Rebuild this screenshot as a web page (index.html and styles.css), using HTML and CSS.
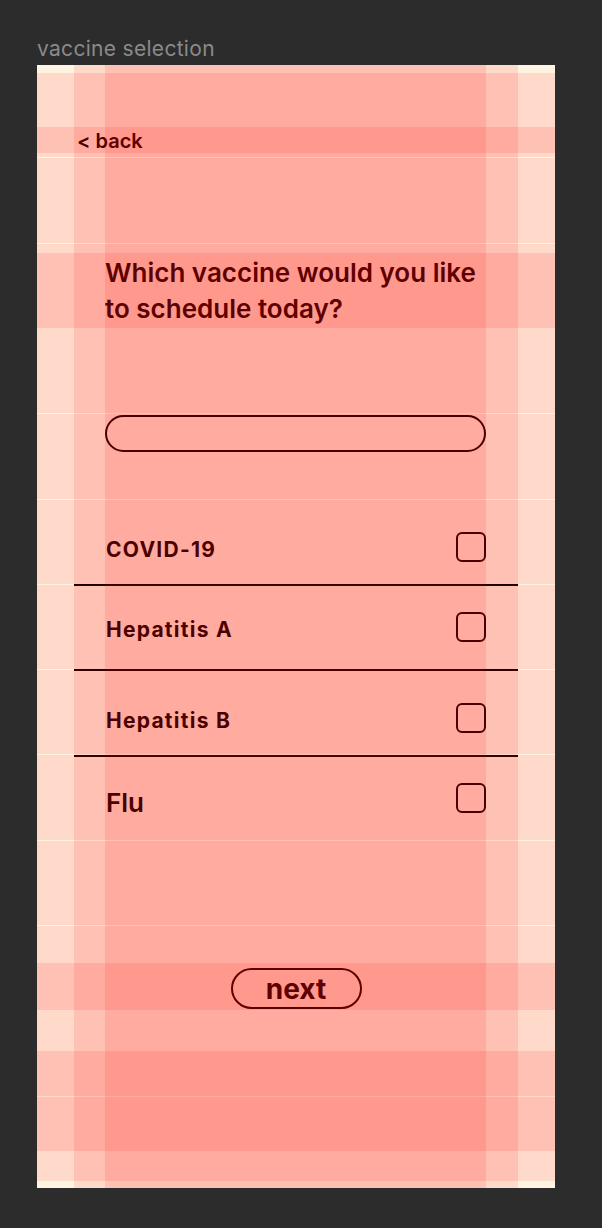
FILE: index.html
```html
<!DOCTYPE html>
<html lang="en">
<head>
<meta charset="utf-8">
<title>vaccine selection</title>
<link rel="stylesheet" href="styles.css">
</head>
<body>
<div class="canvas">
  <div class="frame-label">vaccine selection</div>
  <div class="frame">
    <main class="screen">
      <a class="back">&lt; back</a>
      <h1 class="question">Which vaccine would you like to schedule today?</h1>
      <div class="search"></div>
      <ul class="list">
        <li class="item item--low"><span class="label">COVID-19</span><span class="check"></span></li>
        <li class="item"><span class="label">Hepatitis A</span><span class="check"></span></li>
        <li class="item item--low"><span class="label">Hepatitis B</span><span class="check"></span></li>
        <li class="item item--last"><span class="label label--big">Flu</span><span class="check"></span></li>
      </ul>
      <div class="actions"><button class="next">next</button></div>
    </main>
    <div class="overlay rows">
      <div></div><div></div><div></div><div></div><div></div><div></div><div></div>
      <div></div><div></div><div></div><div></div><div></div><div></div>
    </div>
    <div class="overlay cols cols--outer"><div></div></div>
    <div class="overlay cols cols--inner"><div></div></div>
    <div class="overlay bands">
      <div class="band band--1"></div>
      <div class="band band--2"></div>
      <div class="band band--3"></div>
      <div class="band band--4"></div>
    </div>
  </div>
</div>
</body>
</html>
```

FILE: styles.css
```css
* { box-sizing: border-box; }

html, body {
  margin: 0;
  padding: 0;
  background: #2c2c2c;
}

.canvas {
  padding: 37px 0 0 37px;
  font-family: Inter, "Noto Sans", sans-serif;
}

.frame-label {
  height: 24px;
  line-height: 24px;
  font-size: 21px;
  letter-spacing: 0.3px;
  color: #8a8a8a;
  margin-bottom: 4px;
}

.frame {
  position: relative;
  width: 518px;
  height: 1123px;
  background: #fff4e2;
  overflow: hidden;
}

.screen {
  display: flex;
  flex-direction: column;
  color: #000;
}

.back {
  margin: 64px 0 0 40px;
  font-size: 20px;
  line-height: 25px;
  font-weight: 600;
  height: 25px;
}

.question {
  margin: 101px 0 0 68px;
  width: 381px;
  font-size: 26px;
  line-height: 36px;
  font-weight: 600;
}

.search {
  margin: 88px 0 0 68px;
  width: 381px;
  height: 37px;
  border: 2px solid #000;
  border-radius: 20px;
}

.list {
  list-style: none;
  margin: 48px 0 0 37px;
  padding: 0;
  width: 444px;
}

.item {
  height: 85.5px;
  display: flex;
  align-items: center;
  justify-content: space-between;
  padding: 0 32px 0 32px;
  border-bottom: 2px solid #000;
}

.item--low { padding-top: 11px; }

.item--last {
  border-bottom: none;
  height: 83.5px;
}

.label {
  margin-top: 4px;
  font-size: 21px;
  font-weight: 700;
  letter-spacing: 0.06em;
}

.label--big {
  margin-top: 9px;
  font-size: 26px;
  font-weight: 600;
  letter-spacing: 0;
}

.check {
  width: 30px;
  height: 30px;
  border: 2px solid #000;
  border-radius: 6px;
}

.actions {
  display: flex;
  justify-content: center;
  margin-top: 128px;
}

.next {
  width: 131px;
  height: 41px;
  border: 2px solid #000;
  border-radius: 21px;
  background: transparent;
  font-family: Inter, "Noto Sans", sans-serif;
  font-size: 28px;
  font-weight: 700;
  color: #000;
  display: flex;
  align-items: center;
  justify-content: center;
  padding: 0;
}

/* Layout grid overlays */
.overlay {
  position: absolute;
  inset: 0;
  pointer-events: none;
}

.rows {
  display: grid;
  grid-template-rows: repeat(13, 1fr);
  row-gap: 1px;
  padding: 8px 0 7px;
}

.rows > div,
.cols > div,
.band {
  background: rgba(255, 0, 0, 0.11);
}

.cols--outer { padding: 0 37px; }
.cols--inner { padding: 0 69px 0 68px; }
.cols > div { height: 100%; }

.bands {
  display: flex;
  flex-direction: column;
}

.band--1 { margin-top: 62px; height: 26px; }
.band--2 { margin-top: 100px; height: 76px; }
.band--3 { margin-top: 634px; height: 48px; }
.band--4 { margin-top: 40px; height: 100px; }
```
